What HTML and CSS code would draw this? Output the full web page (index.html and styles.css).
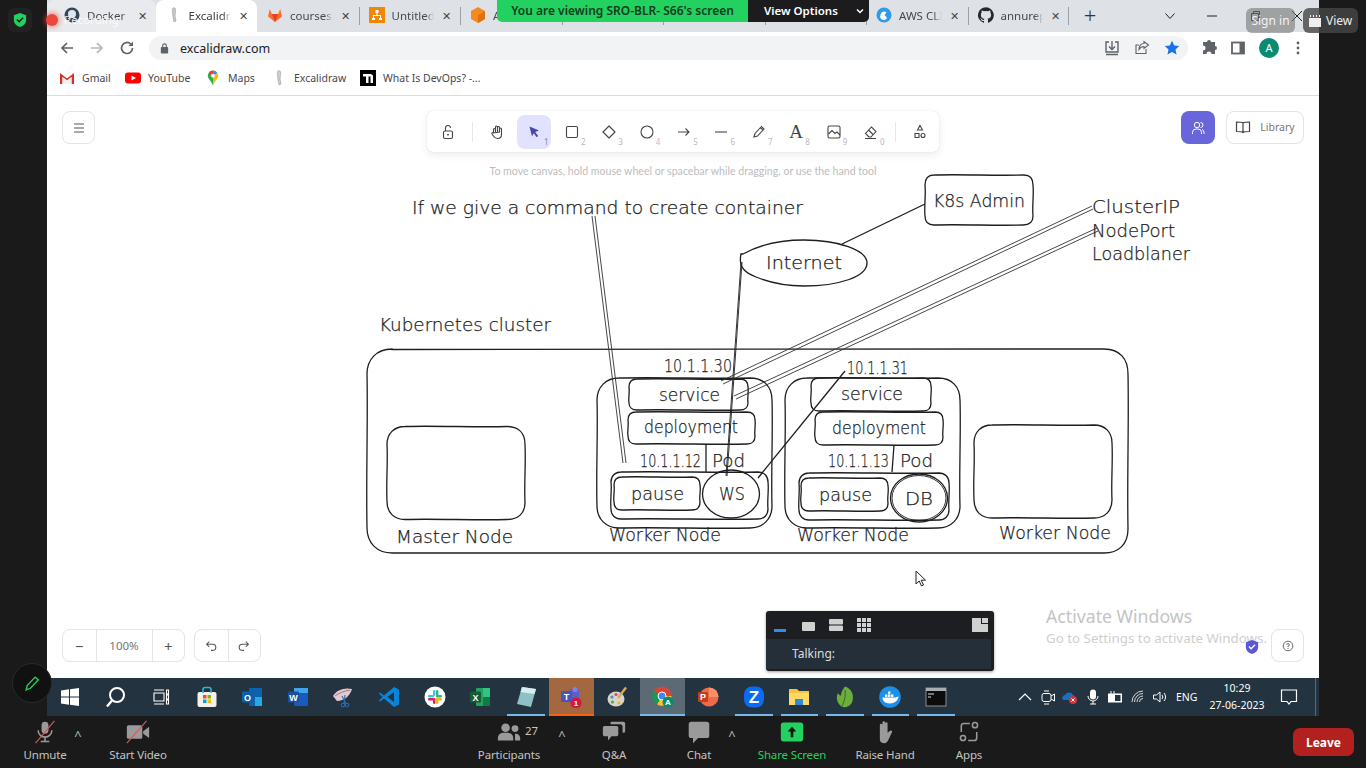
FILE: index.html
```html
<!DOCTYPE html>
<html lang="en">
<head>
<meta charset="utf-8">
<title>Excalidraw - Zoom meeting</title>
<link rel="stylesheet" href="styles.css">
</head>
<body>
<div class="screen">
  <div class="middle">
    <div class="side"></div>
    <div class="desktop">
      <div class="browser">
        <div class="tabstrip">
          <div class="tab tab-hover">
            <svg class="fav" viewBox="0 0 16 16"><circle cx="8" cy="8" r="7.5" fill="#33475b"/><circle cx="8" cy="7" r="4" fill="#dfe6ee"/><path d="M4 12c2-2 6-2 8 0" stroke="#dfe6ee" fill="none"/></svg>
            <span class="tab-title">Docker</span><span class="tab-x">✕</span>
          </div>
          <div class="tab tab-active">
            <svg class="fav" viewBox="0 0 16 16"><path d="M7 1c2-1 3 1 2.500 3L9 9l1 5-2 1-1-5-.5-5C6.300 3 6 2 7 1z" fill="#c9c9c9" stroke="#9a9a9a" stroke-width=".6"/></svg>
            <span class="tab-title">Excalidraw</span><span class="tab-x">✕</span>
          </div>
          <div class="tab">
            <svg class="fav" viewBox="0 0 16 16"><path d="M8 15 1 9.500 2.800 2l2 5h6.400l2-5L15 9.500z" fill="#fc6d26"/><path d="M8 15 4.800 7h6.400z" fill="#e24329"/></svg>
            <span class="tab-title">courses</span><span class="tab-x">✕</span>
          </div>
          <div class="tab tab-sep">
            <svg class="fav" viewBox="0 0 16 16"><rect width="16" height="16" fill="#f08705"/><path d="M6.500 3h3v3h-1v2H12v3h1v2h-3v-2h1V9H5v2h1v2H3v-2h1V8h3.500V6h-1z" fill="#fff"/></svg>
            <span class="tab-title">Untitled</span><span class="tab-x">✕</span>
          </div>
          <div class="tab tab-sep">
            <svg class="fav" viewBox="0 0 16 16"><path d="M8 0l7 4v8l-7 4-7-4V4z" fill="#f58b1f"/><path d="M8 8l7-4v8l-7 4z" fill="#e0700f"/></svg>
            <span class="tab-title">AWS</span><span class="tab-x">✕</span>
          </div>
          <div class="tab tab-sep"></div>
          <div class="tab tab-sep"></div>
          <div class="tab tab-sep"></div>
          <div class="tab tab-sep">
            <svg class="fav" viewBox="0 0 16 16"><circle cx="8" cy="8" r="7.500" fill="#2f9be8"/><path d="M4.500 8a3.500 3.500 0 0 1 6-2.400L8.500 8l2.500 2.800A3.500 3.500 0 0 1 4.500 8z" fill="#fff"/></svg>
            <span class="tab-title">AWS CLI</span><span class="tab-x">✕</span>
          </div>
          <div class="tab tab-sep tab-end">
            <svg class="fav" viewBox="0 0 16 16"><path d="M8 .2a8 8 0 0 0-2.500 15.600c.4.100.5-.2.500-.4v-1.400c-2.200.5-2.700-1-2.700-1-.4-.9-.9-1.200-.9-1.200-.7-.5.100-.5.100-.5.800.1 1.200.8 1.200.8.700 1.200 1.900.9 2.300.7.100-.5.300-.9.500-1.100-1.800-.2-3.600-.9-3.600-4 0-.9.300-1.600.8-2.100-.1-.2-.4-1 .1-2.100 0 0 .7-.2 2.200.8a7.600 7.600 0 0 1 4 0c1.500-1 2.200-.8 2.200-.8.400 1.100.200 1.900.1 2.100.5.600.8 1.300.8 2.100 0 3.100-1.900 3.700-3.700 3.900.3.300.6.700.6 1.500v2.200c0 .2.100.5.600.4A8 8 0 0 0 8 .2z" fill="#24292e"/></svg>
            <span class="tab-title">annurepo</span><span class="tab-x">✕</span>
          </div>
          <span class="newtab">+</span>
          <div class="winctl">
            <svg class="winbtn" viewBox="0 0 12 12"><path d="M1.500 3.500 6 8.500l4.500-5" fill="none" stroke="#222"/></svg>
            <svg class="winbtn" viewBox="0 0 12 12"><path d="M1 6h10" stroke="#222"/></svg>
            <svg class="winbtn" viewBox="0 0 12 12"><path d="M2.500 3.500h7v7h-7zM4.500 3.500v-2h6v6h-1" fill="none" stroke="#222"/></svg>
            <svg class="winbtn" viewBox="0 0 12 12"><path d="M1 1l10 10M11 1 1 11" stroke="#222"/></svg>
          </div>
        </div>

        <div class="addressbar">
          <div class="nav">
            <svg class="navicon" viewBox="0 0 16 16"><path d="M14 8H3M8 3 3 8l5 5" fill="none" stroke="#5f6368" stroke-width="1.700"/></svg>
            <svg class="navicon" viewBox="0 0 16 16"><path d="M2 8h11M8 3l5 5-5 5" fill="none" stroke="#b4b6b9" stroke-width="1.700"/></svg>
            <svg class="navicon" viewBox="0 0 16 16"><path d="M13.500 8A5.500 5.500 0 1 1 11.800 4" fill="none" stroke="#5f6368" stroke-width="1.700"/><path d="M14 1.500V6H9.500z" fill="#5f6368"/></svg>
          </div>
          <div class="omnibox">
            <svg class="lock" viewBox="0 0 12 12"><rect x="2" y="5" width="8" height="7" rx="1" fill="#5f6368"/><path d="M4 5V3.500a2 2 0 0 1 4 0V5" fill="none" stroke="#5f6368" stroke-width="1.200"/></svg>
            <span class="url">excalidraw.com</span>
            <div class="omni-actions">
              <svg class="omni-icon" viewBox="0 0 16 16"><path d="M5 2H2v10h12V2h-3M8 1v8M5 6.500 8 9.500l3-3M2 14.500h12" fill="none" stroke="#5f6368" stroke-width="1.400"/></svg>
              <svg class="omni-icon" viewBox="0 0 16 16"><path d="M12 9v4.500H2V5h3M14.500 5 10 1.500V3.500C7 3.500 5 6 5 9.500 6.500 7 8 6.500 10 6.500V8.500z" fill="none" stroke="#5f6368" stroke-width="1.100"/></svg>
              <svg class="omni-icon" viewBox="0 0 16 16"><path d="M8 .8l2.200 4.700 5 .6-3.700 3.500 1 5L8 12.100l-4.500 2.500 1-5L.8 6.100l5-.6z" fill="#1a73e8"/></svg>
            </div>
          </div>
          <div class="chrome-actions">
            <svg class="omni-icon" viewBox="0 0 16 16"><path d="M6 2a2 2 0 0 1 4 0h4v4a2 2 0 0 1 0 4v4h-3.500a2.500 2.500 0 0 0-5 0H2v-3.500a2.500 2.500 0 0 0 0-5V2z" fill="#5f6368"/></svg>
            <svg class="omni-icon" viewBox="0 0 16 16"><rect x="2" y="2.500" width="12" height="11" fill="#fff" stroke="#5f6368" stroke-width="1.800"/><rect x="9.500" y="2.500" width="4.500" height="11" fill="#5f6368"/></svg>
            <span class="avatar">A</span>
            <svg class="omni-icon" viewBox="0 0 16 16"><circle cx="8" cy="3" r="1.400" fill="#5f6368"/><circle cx="8" cy="8" r="1.400" fill="#5f6368"/><circle cx="8" cy="13" r="1.400" fill="#5f6368"/></svg>
          </div>
        </div>

        <div class="bookmarks">
          <div class="bm bm-gmail">
            <svg class="bm-icon" viewBox="0 0 16 16"><path d="M1 14V3l7 5.500L15 3v11h-2.500V7L8 10.500 3.500 7v7z" fill="#d93025"/><path d="M3.500 14V7L8 10.500 12.500 7v7z" fill="#f1f1f1"/></svg>
            <span>Gmail</span>
          </div>
          <div class="bm bm-yt">
            <svg class="bm-icon" viewBox="0 0 16 16"><rect y="2.500" width="16" height="11" rx="3" fill="#f00"/><path d="M6.500 5.500 11 8l-4.500 2.500z" fill="#fff"/></svg>
            <span>YouTube</span>
          </div>
          <div class="bm bm-maps">
            <svg class="bm-icon" viewBox="0 0 16 16"><path d="M8 .5a5.200 5.200 0 0 1 5.200 5.200C13.200 9 9.500 11 8 15.500z" fill="#fbbc04"/><path d="M8 .5a5.200 5.200 0 0 0-5.200 5.200C2.800 9 6.500 11 8 15.500z" fill="#34a853"/><path d="M4 2.200A5.200 5.200 0 0 1 8 .5v3.300A2 2 0 0 0 6 5.500z" fill="#ea4335"/><path d="M8 .5a5.200 5.200 0 0 1 4.200 2.300L9.500 5A2 2 0 0 0 8 3.800z" fill="#4285f4"/><circle cx="8" cy="5.700" r="1.900" fill="#fff"/></svg>
            <span>Maps</span>
          </div>
          <div class="bm bm-ex">
            <svg class="bm-icon" viewBox="0 0 16 16"><path d="M7 1c2-1 3 1 2.500 3L9 9l1 5-2 1-1-5-.5-5C6.300 3 6 2 7 1z" fill="#cfcfcf" stroke="#9a9a9a" stroke-width=".6"/></svg>
            <span>Excalidraw</span>
          </div>
          <div class="bm">
            <svg class="bm-icon" viewBox="0 0 16 16"><rect width="16" height="16" fill="#000"/><path d="M3 4h8l2 1.500V13h-2.500V6.500h-2V13H6V6.500H3z" fill="#fff"/></svg>
            <span>What Is DevOps? -...</span>
          </div>
        </div>

        <div class="page">
          <svg class="canvas" viewBox="47 96 1272 582">
            <g class="ink">
              <path d="M392 349.500C600 348 900 350 1104 349c16 0 24 10 24 25 1 50-1 105 0 155 0 15-9 24-24 24-200 1-520-1-712 0-15 0-25-10-25-25-1-50 1-105 0-154 0-15 10-25 25-25z"/>
              <path d="M405 426.500c30-1 72 1 102 0 12 0 18 7 18 18 1 20-1 38 0 58 0 11-7 17-18 17-30 1-72-1-102 0-11 0-18-7-18-18-1-20 1-38 0-57 0-11 7-18 18-18z"/>
              <path d="M992 425c30-1 72 1 102 0 11 0 18 7 18 18 1 20-1 38 0 57 0 11-7 18-18 18-30 1-72-1-102 0-11 0-18-7-18-18-1-20 1-38 0-57 0-11 7-18 18-18z"/>
              <path d="M619 378c40-1 90 1 131 0 14 0 22 9 22 22 1 30-1 76 0 106 0 13-9 22-22 22-40 1-90-1-131 0-13 0-22-9-22-22-1-30 1-76 0-106 0-13 9-22 22-22z"/>
              <path d="M637 379c30-1 72 1 103 0 5 0 8 3 8 8 1 5-1 11 0 16 0 4-3 7-8 7-30 1-72-1-103 0-5 0-8-3-8-7-1-5 1-11 0-16 0-5 3-8 8-8z"/>
              <path d="M636 412c30-1 80 1 111 0 5 0 8 3 8 8 1 5-1 11 0 16 0 5-3 8-8 8-30 1-80-1-111 0-5 0-8-3-8-8-1-5 1-11 0-16 0-5 3-8 8-8z"/>
              <path d="M621 472c40-1 100 1 137 0 6 0 10 4 10 10 1 8-1 19 0 27 0 6-4 10-10 10-40 1-100-1-137 0-6 0-10-4-10-10-1-8 1-19 0-27 0-6 4-10 10-10z"/>
              <path d="M622 477c20-1 50 1 70 0 5 0 8 3 8 8 1 5-1 12 0 17 0 5-3 8-8 8-20 1-50-1-70 0-5 0-8-3-8-8-1-5 1-12 0-17 0-5 3-8 8-8z"/>
              <ellipse cx="731" cy="494" rx="28.500" ry="24"/>
              <path d="M706 444v28"/>
              <path d="M807 378c40-1 90 1 131 0 14 0 22 9 22 22 1 30-1 76 0 106 0 13-9 22-22 22-40 1-90-1-131 0-13 0-22-9-22-22-1-30 1-76 0-106 0-13 9-22 22-22z"/>
              <path d="M819 378c30-1 72 1 104 0 5 0 8 3 8 8 1 5-1 12 0 17 0 5-3 8-8 8-30 1-72-1-104 0-5 0-8-3-8-8-1-5 1-12 0-17 0-5 3-8 8-8z"/>
              <path d="M823 412c30-1 82 1 112 0 5 0 8 3 8 8 1 5-1 12 0 17 0 5-3 8-8 8-30 1-82-1-112 0-5 0-8-3-8-8-1-5 1-12 0-17 0-5 3-8 8-8z"/>
              <path d="M809 473c40-1 90 1 130 0 6 0 10 4 10 10 1 8-1 20 0 27 0 6-4 10-10 10-40 1-90-1-130 0-6 0-10-4-10-10-1-8 1-19 0-27 0-6 4-10 10-10z"/>
              <path d="M809 478c20-1 50 1 71 0 5 0 8 3 8 8 1 5-1 12 0 17 0 5-3 8-8 8-20 1-50-1-71 0-5 0-8-3-8-8-1-5 1-12 0-17 0-5 3-8 8-8z"/>
              <ellipse cx="919" cy="498" rx="28.500" ry="24"/>
              <ellipse class="thin" cx="919" cy="498" rx="27" ry="22.500"/>
              <path d="M894 445l-2 27"/>
              <path d="M743 254c18-10 40-14 61-14 34 0 63 10 63 23 0 14-29 23-63 23-20 0-36-4-48-9-10-4-18-9-15-23z"/>
              <path d="M842 244l83-40"/>
              <path d="M934 175c30-1 60 1 90 0 6 0 9 4 9 10 1 10-1 21 0 31 0 6-4 9-10 9-28 1-60-1-89 0-6 0-9-3-9-9-1-10 1-21 0-31 0-6 3-10 9-10z"/>
              <path d="M741 262l-15 214M742 262l-15 214" class="thin"/>
              <path d="M845 371l-87 107"/>
            </g>
            <g class="ink-double">
              <path d="M592 216l31 247M595 216l31 247"/>
              <path d="M1092 206 721 381M1093 209 723 384"/>
              <path d="M1097 228 734 396M1098 231 736 399"/>
            </g>
            <text class="hand" lengthAdjust="spacingAndGlyphs" x="412" y="214" textLength="391">If we give a command to create container</text>
            <text class="hand" lengthAdjust="spacingAndGlyphs" x="379" y="331" textLength="172">Kubernetes cluster</text>
            <text class="hand" lengthAdjust="spacingAndGlyphs" x="766" y="269" textLength="76">Internet</text>
            <text class="hand" lengthAdjust="spacingAndGlyphs" x="933" y="207" textLength="92">K8s Admin</text>
            <text class="hand" lengthAdjust="spacingAndGlyphs" x="1092" y="213" textLength="88">ClusterIP</text>
            <text class="hand" lengthAdjust="spacingAndGlyphs" x="1092" y="237" textLength="83">NodePort</text>
            <text class="hand" lengthAdjust="spacingAndGlyphs" x="1092" y="260" textLength="98">Loadblaner</text>
            <text class="hand" lengthAdjust="spacingAndGlyphs" x="664" y="372" textLength="68">10.1.1.30</text>
            <text class="hand" lengthAdjust="spacingAndGlyphs" x="847" y="374" textLength="61">10.1.1.31</text>
            <text class="hand" lengthAdjust="spacingAndGlyphs" x="659" y="401" textLength="61">service</text>
            <text class="hand" lengthAdjust="spacingAndGlyphs" x="644" y="433" textLength="94">deployment</text>
            <text class="hand" lengthAdjust="spacingAndGlyphs" x="640" y="467" textLength="61">10.1.1.12</text>
            <text class="hand" lengthAdjust="spacingAndGlyphs" x="712" y="467" textLength="33">Pod</text>
            <text class="hand" lengthAdjust="spacingAndGlyphs" x="631" y="500" textLength="53">pause</text>
            <text class="hand" lengthAdjust="spacingAndGlyphs" x="719" y="500" textLength="26">WS</text>
            <text class="hand" lengthAdjust="spacingAndGlyphs" x="396" y="543" textLength="117">Master Node</text>
            <text class="hand" lengthAdjust="spacingAndGlyphs" x="609" y="541" textLength="112">Worker Node</text>
            <text class="hand" lengthAdjust="spacingAndGlyphs" x="841" y="400" textLength="62">service</text>
            <text class="hand" lengthAdjust="spacingAndGlyphs" x="832" y="434" textLength="94">deployment</text>
            <text class="hand" lengthAdjust="spacingAndGlyphs" x="828" y="467" textLength="61">10.1.1.13</text>
            <text class="hand" lengthAdjust="spacingAndGlyphs" x="900" y="467" textLength="33">Pod</text>
            <text class="hand" lengthAdjust="spacingAndGlyphs" x="819" y="501" textLength="53">pause</text>
            <text class="hand" lengthAdjust="spacingAndGlyphs" x="905" y="505" textLength="28">DB</text>
            <text class="hand" lengthAdjust="spacingAndGlyphs" x="797" y="541" textLength="112">Worker Node</text>
            <text class="hand" lengthAdjust="spacingAndGlyphs" x="999" y="539" textLength="112">Worker Node</text>
          </svg>

          <div class="page-top">
            <div class="top-left">
              <button class="ex-btn menu-btn">
                <svg class="tool" viewBox="0 0 16 16"><path d="M3 4h10M3 8h10M3 12h10" stroke="#555" stroke-width="1.100"/></svg>
              </button>
            </div>
            <div class="top-center">
              <div class="toolbar">
                <div class="tool-cell"><svg class="tool" viewBox="0 0 16 16"><rect x="3.500" y="7" width="9" height="7.500" rx="1.500" class="ts"/><path d="M5.500 7V4a2.500 2.500 0 0 1 5 0" class="ts"/><circle cx="8" cy="10.700" r=".9" fill="#444"/></svg></div>
                <span class="tool-sep"></span>
                <div class="tool-cell"><svg class="tool" viewBox="0 0 16 16"><path d="M4.500 9V5.500a1 1 0 0 1 2 0V8M6.500 7.500V3a1 1 0 0 1 2 0v5M8.500 7.500V3.500a1 1 0 0 1 2 0V8M10.500 8V5a1 1 0 0 1 2 0v5.500c0 2.500-1.500 4-4 4-2 0-3-.8-4-2.500L3 10c-.6-1 .6-2 1.500-1z" class="ts"/></svg></div>
                <div class="tool-cell tool-on"><svg class="tool" viewBox="0 0 16 16"><path d="M3.500 2.500l9.500 4-3.800 1.500 3 4-1.500 1.200-3-4L6 12.500z" fill="#4a47b1"/></svg><sub class="key">1</sub></div>
                <div class="tool-cell"><svg class="tool" viewBox="0 0 16 16"><rect x="2.500" y="2.500" width="11" height="11" rx="1.500" class="ts"/></svg><sub class="key">2</sub></div>
                <div class="tool-cell"><svg class="tool" viewBox="0 0 16 16"><path d="M8 2l6 6-6 6-6-6z" class="ts" stroke-linejoin="round"/></svg><sub class="key">3</sub></div>
                <div class="tool-cell"><svg class="tool" viewBox="0 0 16 16"><circle cx="8" cy="8" r="6" class="ts"/></svg><sub class="key">4</sub></div>
                <div class="tool-cell"><svg class="tool" viewBox="0 0 16 16"><path d="M2 8h11M9.500 4.500 13 8l-3.500 3.500" class="ts"/></svg><sub class="key">5</sub></div>
                <div class="tool-cell"><svg class="tool" viewBox="0 0 16 16"><path d="M2 8h12" class="ts"/></svg><sub class="key">6</sub></div>
                <div class="tool-cell"><svg class="tool" viewBox="0 0 16 16"><path d="M3 13l1-3.500 6.500-7 2.500 2.500-6.500 7zM9.500 3.700l2.500 2.500" class="ts"/></svg><sub class="key">7</sub></div>
                <div class="tool-cell"><span class="tool-a">A</span><sub class="key">8</sub></div>
                <div class="tool-cell"><svg class="tool" viewBox="0 0 16 16"><rect x="2" y="2" width="12" height="12" rx="1.500" class="ts"/><path d="M2.500 10 6 6.500l3 3 2-1.500 3 3" class="ts"/></svg><sub class="key">9</sub></div>
                <div class="tool-cell"><svg class="tool" viewBox="0 0 16 16"><path d="M6 13 2.500 9.500l6-6.500L13 7.500 8 13zM5.500 6l4.500 4.500M2 14.500h11" class="ts"/></svg><sub class="key">0</sub></div>
                <span class="tool-sep"></span>
                <div class="tool-cell"><svg class="tool" viewBox="0 0 16 16"><path d="M8 1.500 10.500 6h-5zM3 9.500h4v4H3z" class="ts"/><circle cx="11" cy="11.500" r="2" class="ts"/></svg></div>
              </div>
              <p class="hint">To move canvas, hold mouse wheel or spacebar while dragging, or use the hand tool</p>
            </div>
            <div class="top-right">
              <button class="collab">
                <svg class="tool" viewBox="0 0 16 16"><circle cx="7" cy="5" r="2.700" fill="none" stroke="#fff"/><path d="M2.500 14v-1.500A3.500 3.500 0 0 1 6 9h2a3.500 3.500 0 0 1 3.500 3.500V14M10.500 2.500a2.500 2.500 0 0 1 0 5M12 9.500a3 3 0 0 1 2 3V14" fill="none" stroke="#fff"/></svg>
              </button>
              <button class="ex-btn library">
                <svg class="tool" viewBox="0 0 16 16"><path d="M8 4C6.500 3 4 3 1.500 3v9.500c2.500 0 5 0 6.500 1 1.500-1 4-1 6.500-1V3C12 3 9.500 3 8 4zM8 4v9.500" fill="none" stroke="#444" stroke-width="1.200"/></svg>
                <span>Library</span>
              </button>
            </div>
          </div>

          <div class="page-bottom">
            <div class="zoom-controls">
              <div class="ex-group">
                <span class="ex-cell ex-sq">−</span>
                <span class="ex-cell ex-pct">100%</span>
                <span class="ex-cell ex-sq">+</span>
              </div>
              <div class="ex-group">
                <span class="ex-cell ex-sq"><svg class="tool-sm" viewBox="0 0 16 16"><path d="M3 6h7a3.500 3.500 0 0 1 0 7H8M6 3 3 6l3 3" fill="none" stroke="#555" stroke-width="1.200"/></svg></span>
                <span class="ex-cell ex-sq"><svg class="tool-sm" viewBox="0 0 16 16"><path d="M13 6H6a3.500 3.500 0 0 0 0 7h2M10 3l3 3-3 3" fill="none" stroke="#555" stroke-width="1.200"/></svg></span>
              </div>
            </div>
            <button class="ex-btn help">
              <svg class="tool-sm" viewBox="0 0 16 16"><circle cx="8" cy="8" r="5.500" fill="none" stroke="#555"/><path d="M6.500 6.500A1.500 1.500 0 1 1 8 8.200V9.300M8 10.500v1" fill="none" stroke="#555"/></svg>
            </button>
          </div>
        </div>
      </div>

      <div class="taskbar">
        <div class="task-apps">
          <div class="app"><svg class="appicon" viewBox="0 0 22 22"><path d="M2 4.500 10 3.300v7.200H2zM11 3.200 20 2v8.500h-9zM2 11.500h8v7.200L2 17.500zM11 11.500h9V20l-9-1.200z" fill="#fff"/></svg></div>
          <div class="app"><svg class="appicon" viewBox="0 0 22 22"><circle cx="13" cy="9" r="7" fill="none" stroke="#fff" stroke-width="2"/><path d="M8 14.500 3 20.500" stroke="#fff" stroke-width="2.400"/></svg></div>
          <div class="app"><svg class="appicon" viewBox="0 0 22 22"><path d="M4 7h10v8H4zM4 4h10M4 18h10M16.500 4h2v4h-2zM16.500 9h2v4h-2zM16.500 14h2v4h-2z" fill="none" stroke="#fff" stroke-width="1.100"/></svg></div>
          <div class="app"><svg class="appicon" viewBox="0 0 22 22"><rect x="1.500" y="6" width="19" height="15" rx="2" fill="#f4f1ea"/><path d="M7 7V3.500A2 2 0 0 1 9 1.500h4a2 2 0 0 1 2 2V7" fill="none" stroke="#29b6d8" stroke-width="1.600"/><rect x="7" y="9" width="3.500" height="3.500" fill="#f25022"/><rect x="11.500" y="9" width="3.500" height="3.500" fill="#7fba00"/><rect x="7" y="13.500" width="3.500" height="3.500" fill="#00a4ef"/><rect x="11.500" y="13.500" width="3.500" height="3.500" fill="#ffb900"/></svg></div>
          <div class="app"><svg class="appicon" viewBox="0 0 22 22"><rect x="8" y="2" width="13" height="18" rx="1" fill="#0a64ad"/><rect x="14" y="11" width="7" height="9" fill="#28a8ea"/><rect x="1" y="5.500" width="11" height="11" rx="1" fill="#0f5fa8"/><text x="6.500" y="14.500" class="app-letter">O</text></svg></div>
          <div class="app"><svg class="appicon" viewBox="0 0 22 22"><rect x="7" y="2" width="14" height="18" rx="1" fill="#185abd"/><rect x="7" y="2" width="14" height="5" fill="#41a5ee"/><rect x="1" y="5.500" width="11" height="11" rx="1" fill="#1d4f9e"/><text x="6.500" y="14.500" class="app-letter">W</text></svg></div>
          <div class="app"><svg class="appicon" viewBox="0 0 22 22"><path d="M1 10C4 4 13 1 20 3 18 10 12 15 5 15z" fill="#e4c9cf"/><path d="M3 10C7 7 12 5 18 4" stroke="#a8727f" fill="none"/><path d="M10 10l4 8M13 9l-1 9" stroke="#2c6fb8" stroke-width="1.200"/><circle cx="15" cy="19" r="1.800" fill="none" stroke="#2c6fb8"/><circle cx="11" cy="19" r="1.800" fill="none" stroke="#2c6fb8"/></svg></div>
          <div class="app"><svg class="appicon" viewBox="0 0 22 22"><path d="M16 1l5 2.500v15L16 21 6 12.500 2 15.500 0.800 14.500 4.500 11 .8 7.500 2 6.500l4 3z" fill="#0a84d6"/><path d="M16 6 9.500 11l6.500 5z" fill="#233340"/></svg></div>
          <div class="app"><svg class="appicon" viewBox="0 0 22 22"><circle cx="11" cy="11" r="10.500" fill="#fff"/><rect x="9" y="4" width="2.400" height="6" rx="1.200" fill="#36c5f0"/><rect x="4" y="9" width="6" height="2.400" rx="1.200" fill="#36c5f0"/><rect x="12" y="4" width="2.400" height="6" rx="1.200" fill="#2eb67d"/><rect x="12" y="9" width="6" height="2.400" rx="1.200" fill="#2eb67d"/><rect x="12" y="12" width="2.400" height="6" rx="1.200" fill="#ecb22e"/><rect x="12" y="12" width="6" height="2.400" rx="1.200" fill="#ecb22e"/><rect x="9" y="12" width="2.400" height="6" rx="1.200" fill="#e01e5a"/><rect x="4" y="12" width="6" height="2.400" rx="1.200" fill="#e01e5a"/></svg></div>
          <div class="app"><svg class="appicon" viewBox="0 0 22 22"><rect x="7" y="2" width="14" height="18" rx="1" fill="#21a366"/><rect x="14" y="2" width="7" height="9" fill="#33c481"/><rect x="14" y="11" width="7" height="9" fill="#107c41"/><rect x="1" y="5.500" width="11" height="11" rx="1" fill="#185c37"/><text x="6.500" y="14.500" class="app-letter">X</text></svg></div>
          <div class="app app-open"><svg class="appicon" viewBox="0 0 22 22"><path d="M7 1l14 2-5 18-14-3z" fill="#8fc0c8"/><path d="M7 1l14 2-1.500 5L5.500 6z" fill="#d6eef0"/></svg></div>
          <div class="app app-alert"><svg class="appicon" viewBox="0 0 22 22"><rect x="9" y="3" width="10" height="14" rx="2" fill="#5b5fc7"/><circle cx="15" cy="3.500" r="2.500" fill="#7b83eb"/><rect x="1" y="5" width="11" height="11" rx="1" fill="#4b53bc"/><text x="6.500" y="14" class="app-letter">T</text><circle cx="16" cy="17" r="5.500" fill="#d6173b"/><text x="16" y="20" class="app-badge">1</text></svg></div>
          <div class="app"><svg class="appicon" viewBox="0 0 22 22"><ellipse cx="10" cy="13" rx="8.500" ry="7.500" fill="#d8d4c8"/><circle cx="6" cy="11" r="1.600" fill="#3f8fd2"/><circle cx="10" cy="8.500" r="1.600" fill="#e0503a"/><circle cx="6.500" cy="16" r="1.600" fill="#53a546"/><circle cx="13" cy="17" r="1.600" fill="#e5b42f"/><path d="M12 12 20 1.500" stroke="#d8a860" stroke-width="2.400"/></svg></div>
          <div class="app app-active app-open"><svg class="appicon" viewBox="0 0 22 22"><circle cx="10" cy="10" r="9.500" fill="#db4437"/><path d="M10 10H19.500A9.500 9.500 0 0 1 5 18.200z" fill="#fbc02d"/><path d="M10 10 5 18.200A9.500 9.500 0 0 1 1.800 5z" fill="#0f9d58"/><circle cx="10" cy="10" r="4" fill="#4285f4" stroke="#fff"/><circle cx="16" cy="16" r="5.500" fill="#0b8a72"/><text x="16" y="19" class="app-badge">A</text></svg></div>
          <div class="app"><svg class="appicon" viewBox="0 0 22 22"><circle cx="12" cy="11" r="9.500" fill="#ed6c47"/><path d="M12 1.500A9.500 9.500 0 0 1 21.500 11H12z" fill="#ff8f6b"/><rect x="1" y="6" width="10" height="10" rx="1" fill="#c43e1c"/><text x="6" y="14" class="app-letter">P</text></svg></div>
          <div class="app app-open"><svg class="appicon" viewBox="0 0 22 22"><rect x="1" y="0.500" width="20" height="21" rx="8" fill="#0b6cf1"/><text x="11" y="17" class="app-z">Z</text></svg></div>
          <div class="app app-open"><svg class="appicon" viewBox="0 0 22 22"><path d="M1 3h8l2 2h10v14H1z" fill="#f5c542"/><rect x="1" y="7" width="20" height="12" fill="#ffd966"/><rect x="7" y="13" width="8" height="6" fill="#2d8bd6"/></svg></div>
          <div class="app app-open"><svg class="appicon" viewBox="0 0 22 22"><path d="M11 .5C18 3 20 9 18.500 15 17 20 12 22 9 21 3 19 1.500 11 4 7c1 2 2 2.500 3 2.500C7 6 9 3 11 .5z" fill="#6cae3e"/><path d="M11 4c1 6-1 12-3 16" stroke="#2f6b22" fill="none"/></svg></div>
          <div class="app app-open"><svg class="appicon" viewBox="0 0 22 22"><circle cx="11" cy="11" r="10.800" fill="#1d8fe8"/><path d="M3.500 11.500h13c1 0 1.500-1 3-1-.3 3-3 7-8.500 7-5 0-7.500-3-7.500-6z" fill="#fff"/><rect x="6" y="8.500" width="2.400" height="2.400" fill="#fff"/><rect x="9" y="8.500" width="2.400" height="2.400" fill="#fff"/><rect x="12" y="8.500" width="2.400" height="2.400" fill="#fff"/><rect x="9" y="5.500" width="2.400" height="2.400" fill="#fff"/></svg></div>
          <div class="app app-open"><svg class="appicon" viewBox="0 0 22 22"><rect x="1" y="2" width="20" height="18" fill="#0c0c0c" stroke="#8a8f94"/><rect x="1" y="2" width="20" height="3" fill="#a8adb2"/><path d="M3 8h6M3 11h3" stroke="#ddd" stroke-width="1.100"/></svg></div>
        </div>
        <div class="tray">
          <svg class="tray-i" viewBox="0 0 16 16"><path d="M2 11l6-6 6 6" fill="none" stroke="#fff" stroke-width="1.200"/></svg>
          <svg class="tray-i" viewBox="0 0 16 16"><rect x="2" y="4.500" width="9" height="8" rx="2" fill="none" stroke="#fff"/><path d="M11 7l3.500-2v7l-3.500-2M4 2h5M4 15h5" fill="none" stroke="#fff"/></svg>
          <svg class="tray-i" viewBox="0 0 16 16"><path d="M1 11a3 3 0 0 1 2-5 4.500 4.500 0 0 1 8 0 3 3 0 0 1 1 5z" fill="#1a6fc4"/><circle cx="11" cy="11" r="4" fill="#d13438"/><path d="M9.500 9.500l3 3m0-3-3 3" stroke="#fff"/></svg>
          <svg class="tray-i" viewBox="0 0 16 16"><rect x="5" y="0.500" width="6" height="10" rx="3" fill="#fff"/><path d="M3 7a5 5 0 0 0 10 0M8 12v3M5 15h6" fill="none" stroke="#fff"/></svg>
          <svg class="tray-i" viewBox="0 0 16 16"><rect x="1.500" y="5" width="13" height="8" fill="#fff" stroke="#fff"/><rect x="8" y="6" width="5.500" height="6" fill="#233340"/><path d="M4 2v3M7 2v3" stroke="#fff"/></svg>
          <svg class="tray-i" viewBox="0 0 16 16"><path d="M2 13a11 11 0 0 1 11-11M4.500 13A8.500 8.500 0 0 1 13 4.500M7 13a6 6 0 0 1 6-6M9.500 13a3.500 3.500 0 0 1 3.500-3.500" fill="none" stroke="#fff" stroke-width=".8"/></svg>
          <svg class="tray-i" viewBox="0 0 16 16"><path d="M1.500 6h3L8 3v10L4.500 10h-3zM10 6a3 3 0 0 1 0 4M12 4a6 6 0 0 1 0 8" fill="none" stroke="#fff"/></svg>
          <span class="lang">ENG</span>
          <div class="clock"><span>10:29</span><span>27-06-2023</span></div>
          <svg class="tray-note" viewBox="0 0 18 18"><path d="M1.500 2h15v11.500H11l-2 2.500-2-2.500H1.500z" fill="none" stroke="#fff" stroke-width="1.200"/></svg>
          <span class="show-desktop"></span>
        </div>
      </div>
    </div>
    <div class="side"></div>
  </div>

  <div class="meeting">
    <div class="m-item m-mute">
      <svg class="m-icon" viewBox="0 0 28 28"><rect x="10" y="2" width="8" height="14" rx="4" fill="#9a9a9a"/><path d="M6 12a8 8 0 0 0 16 0M14 20v5M9 25h10" fill="none" stroke="#9a9a9a" stroke-width="1.800"/><path d="M3 27 25 1" stroke="#e0565b" stroke-width="1.300"/></svg>
      <span>Unmute</span>
    </div>
    <span class="m-caret m-c1">^</span>
    <div class="m-item m-video">
      <svg class="m-icon" viewBox="0 0 28 28"><rect x="1" y="6" width="18" height="16" rx="2" fill="#9a9a9a"/><path d="M20 13l7-5v13l-7-5z" fill="#9a9a9a"/><path d="M1 27 24 1" stroke="#e0565b" stroke-width="1.300"/></svg>
      <span>Start Video</span>
    </div>
    <div class="m-item m-part">
      <span class="m-iconwrap">
        <svg class="m-icon m-icon-wide" viewBox="0 0 28 28"><circle cx="10" cy="9" r="5" fill="#9a9a9a"/><circle cx="21" cy="10" r="4" fill="#9a9a9a"/><path d="M1 24v-3a6 6 0 0 1 6-6h6a6 6 0 0 1 6 6v3zM21 16h1a5 5 0 0 1 5 5v3h-6z" fill="#9a9a9a"/></svg>
        <span class="m-count">27</span>
      </span>
      <span>Participants</span>
    </div>
    <span class="m-caret m-c2">^</span>
    <div class="m-item m-qa">
      <svg class="m-icon" viewBox="0 0 28 28"><path d="M3 7h14a2 2 0 0 1 2 2v8a2 2 0 0 1-2 2h-6l-4 5v-5H3a2 2 0 0 1-2-2V9a2 2 0 0 1 2-2z" fill="#9a9a9a"/><path d="M11 2h14a2 2 0 0 1 2 2v9a2 2 0 0 1-2 2h-1v-7a3 3 0 0 0-3-3H10V3a1 1 0 0 1 1-1z" fill="#9a9a9a"/></svg>
      <span>Q&amp;A</span>
    </div>
    <div class="m-item m-chat">
      <svg class="m-icon" viewBox="0 0 28 28"><path d="M5 2h18a3 3 0 0 1 3 3v13a3 3 0 0 1-3 3H13l-6 6v-6H5a3 3 0 0 1-3-3V5a3 3 0 0 1 3-3z" fill="#9a9a9a"/></svg>
      <span>Chat</span>
    </div>
    <span class="m-caret m-c3">^</span>
    <div class="m-item m-share">
      <svg class="m-icon" viewBox="0 0 28 28"><rect x="1" y="3" width="26" height="22" rx="3" fill="#22d15f"/><path d="M14 8l5 5.500h-3.500V20h-3v-6.500H9z" fill="#111"/></svg>
      <span>Share Screen</span>
    </div>
    <div class="m-item m-raise">
      <svg class="m-icon" viewBox="0 0 28 28"><path d="M8 14V6a1.500 1.500 0 0 1 3 0v6V3a1.500 1.500 0 0 1 3 0v9V4a1.500 1.500 0 0 1 3 0v9 2l3-2.500c1.500-1 3 .5 2 2L18 23c-1 2-2 4-5 4-4 0-5-2-5-5z" fill="#9a9a9a"/></svg>
      <span>Raise Hand</span>
    </div>
    <div class="m-item m-apps">
      <svg class="m-icon" viewBox="0 0 28 28"><circle cx="21" cy="6" r="3" fill="none" stroke="#9a9a9a" stroke-width="1.800"/><circle cx="7" cy="21" r="3" fill="none" stroke="#9a9a9a" stroke-width="1.800"/><path d="M15 4H8a3 3 0 0 0-3 3v7M13 24h7a3 3 0 0 0 3-3v-7" fill="none" stroke="#9a9a9a" stroke-width="1.800"/></svg>
      <span>Apps</span>
    </div>
    <button class="leave">Leave</button>
  </div>

  <div class="shield-box">
    <svg class="shield" viewBox="0 0 16 18"><path d="M8 1l7 2.500V9c0 4-3 7-7 8-4-1-7-4-7-8V3.500z" fill="#22d15f"/><path d="M4.500 8.500l2.500 2.500 4.500-4.500" fill="none" stroke="#111" stroke-width="1.600"/></svg>
  </div>
  <div class="recording"><span class="rec-dot"></span><span>Recording</span></div>
  <div class="banner">
    <span class="banner-green">You are viewing SRO-BLR- S66's screen</span>
    <span class="banner-dark">View Options<svg class="banner-caret" viewBox="0 0 10 10"><path d="M2 3.500 5 6.500 8 3.500" fill="none" stroke="#fff" stroke-width="1.500"/></svg></span>
  </div>
  <div class="signin">Sign in</div>
  <div class="viewbtn">
    <svg class="viewgrid" viewBox="0 0 12 12"><rect y="3" width="12" height="9" fill="#eee"/><path d="M1.500 0v2M4.500 0v2M7.500 0v2M10.500 0v2" stroke="#eee"/></svg>
    <span>View</span>
  </div>
  <div class="pen">
    <svg class="pen-i" viewBox="0 0 16 16"><path d="M2 14l1-4 7.500-8 3 2.500-7.500 8z" fill="none" stroke="#22d15f" stroke-width="1.300"/></svg>
  </div>
  <div class="activate">
    <p class="act-1">Activate Windows</p>
    <p class="act-2">Go to Settings to activate Windows.</p>
  </div>
  <svg class="bluecheck" viewBox="0 0 16 18"><path d="M8 1l7 2.500V9c0 4-3 7-7 8-4-1-7-4-7-8V3.500z" fill="#5b57d6"/><path d="M4.500 8.500l2.500 2.500 4.500-4.500" fill="none" stroke="#fff" stroke-width="1.500"/></svg>
  <div class="gallery">
    <div class="gal-top">
      <div class="gal-views">
        <span class="gal-min"></span>
        <span class="gal-speaker"></span>
        <svg class="gal-icon" viewBox="0 0 14 14"><rect y="1" width="14" height="5.500" rx="1" fill="#d0d0d0"/><rect y="7.500" width="14" height="5.500" rx="1" fill="#d0d0d0"/></svg>
        <svg class="gal-icon" viewBox="0 0 14 14"><path d="M0 0h4v4H0zM5 0h4v4H5zM10 0h4v4h-4zM0 5h4v4H0zM5 5h4v4H5zM10 5h4v4h-4zM0 10h4v4H0zM5 10h4v4H5zM10 10h4v4h-4z" fill="#d0d0d0"/></svg>
      </div>
      <svg class="gal-pip" viewBox="0 0 16 14"><path d="M0 0h9v6h7v8H0zM10 0h6v5h-6z" fill="#d0d0d0"/></svg>
    </div>
    <div class="gal-talk">Talking:</div>
  </div>
  <svg class="cursor" viewBox="0 0 12 17"><path d="M1 1v13l3.200-3 2.300 5 2-1-2.300-4.800H10.500z" fill="#fff" stroke="#222" stroke-width="1"/></svg>
</div>
</body>
</html>
```

FILE: styles.css
```css
* { box-sizing: border-box; }
html, body { margin: 0; padding: 0; height: 100%; overflow: hidden; }
body { font-family: "Noto Sans", "Liberation Sans", sans-serif; background: #1a1a1a; }
button { font: inherit; padding: 0; cursor: default; }
p { margin: 0; }

.screen { position: relative; width: 1366px; height: 768px; background: #1a1a1a; display: flex; flex-direction: column; overflow: hidden; }
.middle { display: flex; height: 716px; flex: none; }
.side { width: 47px; flex: none; background: #1a1a1a; }
.desktop { width: 1272px; flex: none; display: flex; flex-direction: column; }
.browser { height: 678px; flex: none; display: flex; flex-direction: column; background: #fff; }

/* tabs */
.tabstrip { height: 32px; flex: none; background: #dee1e6; display: flex; align-items: stretch; padding-left: 7px; }
.tab { width: 101.500px; flex: none; display: flex; align-items: center; padding: 0 8px 2px 10px; gap: 7px; font-size: 11.500px; color: #45494e; position: relative; }
.tab-hover { background: #e8eaed; border-radius: 8px 8px 0 0; margin-left: -7px; width: 108.500px; padding-left: 17px; }
.tab-active { background: #fff; border-radius: 8px 8px 0 0; color: #3c4043; }
.tab-sep::before { content: ""; position: absolute; left: 0; top: 7px; height: 18px; border-left: 1px solid #9aa0a6; }
.tab-end::after { content: ""; position: absolute; right: 0; top: 7px; height: 18px; border-left: 1px solid #9aa0a6; }
.fav { width: 16px; height: 16px; flex: none; }
.tab-title { flex: 1; overflow: hidden; white-space: nowrap; -webkit-mask-image: linear-gradient(90deg, #000 80%, transparent); mask-image: linear-gradient(90deg, #000 80%, transparent); }
.tab-x { font-size: 11px; color: #444; flex: none; width: 11px; text-align: center; }
.newtab { font-size: 22px; line-height: 30px; color: #333; font-weight: 300; margin-left: 14px; width: 14px; text-align: center; }
.winctl { margin-left: auto; display: flex; align-items: center; gap: 30.500px; padding-right: 16px; }
.winbtn { width: 12px; height: 12px; }

/* address */
.addressbar { height: 32px; flex: none; display: flex; align-items: center; background: #fff; padding-left: 12px; }
.nav { display: flex; gap: 14px; width: 90px; flex: none; }
.navicon { width: 16px; height: 16px; }
.omnibox { width: 1039px; height: 24px; flex: none; background: #f1f3f4; border-radius: 12px; display: flex; align-items: center; padding: 0 8px 0 10px; }
.lock { width: 11px; height: 12px; }
.url { font-size: 12.500px; color: #202124; margin-left: 10px; }
.omni-actions { margin-left: auto; display: flex; gap: 14px; }
.omni-icon { width: 16px; height: 16px; }
.chrome-actions { margin-left: 13px; display: flex; align-items: center; gap: 13px; }
.avatar { width: 20px; height: 20px; margin: 0 -2px 0 0; border-radius: 50%; background: #0b8a72; color: #fff; font-size: 11px; line-height: 20px; text-align: center; }

/* bookmarks */
.bookmarks { height: 32px; flex: none; background: #fff; border-bottom: 1px solid #dadce0; display: flex; align-items: center; padding: 0 0 3px 12px; font-size: 10.500px; color: #45494e; }
.bm { display: flex; align-items: center; gap: 7px; white-space: nowrap; }
.bm-icon { width: 16px; height: 16px; flex: none; }
.bm-gmail { width: 66px; }
.bm-yt { width: 80px; }
.bm-maps { width: 66px; }
.bm-ex { width: 89px; }

/* excalidraw */
.page { position: relative; flex: 1; display: flex; flex-direction: column; justify-content: space-between; padding: 15px 15px 16px; background: #fff; }
.canvas { position: absolute; left: 0; top: 0; width: 1272px; height: 582px; }
.ink path, .ink ellipse { fill: none; stroke: #1e1e1e; stroke-width: 1.300; }
.ink .thin { stroke-width: .9; }
.ink-double path { fill: none; stroke: #333; stroke-width: .9; }
.hand { font-family: "DejaVu Sans", sans-serif; font-weight: 200; font-size: 17px; fill: #1e1e1e; stroke: #1e1e1e; stroke-width: .25; }

.page-top { position: relative; display: grid; grid-template-columns: 1fr auto 1fr; align-items: start; }
.top-right { display: flex; justify-content: flex-end; gap: 11px; }
.ex-btn { background: #fff; border: 1px solid #e3e3e8; border-radius: 8px; display: flex; align-items: center; justify-content: center; }
.menu-btn { width: 33px; height: 33px; }
.tool { width: 16px; height: 16px; }
.tool-sm { width: 14px; height: 14px; display: block; }
.ts { fill: none; stroke: #444; stroke-width: 1.100; }

.top-center { display: flex; flex-direction: column; align-items: center; }
.toolbar { width: 512px; height: 41px; background: #fff; border-radius: 6px; box-shadow: 0 0 1px rgba(0,0,0,.18), 0 3px 8px rgba(0,0,0,.08); display: flex; align-items: center; padding: 0 2px; }
.tool-cell { width: 37.400px; height: 34px; flex: none; display: flex; align-items: center; justify-content: center; position: relative; border-radius: 8px; }
.tool-on { background: #e3e2fe; width: 34px; margin: 0 1.700px; }
.tool-sep { width: 1px; height: 20px; background: #e7e7eb; flex: none; margin: 0 5.500px; }
.key { position: absolute; right: 5px; bottom: 3px; font-size: 8px; line-height: 1; color: #b8b8bf; }
.tool-on .key { color: #7c7aa8; right: 3px; }
.tool-a { font-family: "Liberation Serif", serif; font-size: 19px; color: #444; line-height: 1; }
.hint { font-family: Lato, "Noto Sans", sans-serif; font-size: 10.600px; color: #bdbdbd; margin-top: 12px; line-height: 14px; white-space: nowrap; }

.collab { width: 34px; height: 33px; background: #6965db; border: 0; border-radius: 8px; display: flex; align-items: center; justify-content: center; }
.library { width: 78px; height: 33px; gap: 9px; font-size: 10.500px; color: #777; padding-bottom: 1px; }

.page-bottom { position: relative; display: flex; justify-content: space-between; align-items: flex-end; }
.zoom-controls { display: flex; gap: 9px; }
.ex-group { display: flex; height: 33px; background: #fff; border: 1px solid #e3e3e8; border-radius: 8px; }
.ex-cell { display: flex; align-items: center; justify-content: center; font-size: 15px; color: #555; }
.ex-sq { width: 32.500px; }
.ex-sq + .ex-sq, .ex-pct, .ex-pct + .ex-sq { border-left: 1px solid #e3e3e8; }
.ex-pct { width: 56px; font-size: 11.500px; color: #777; }
.help { width: 33px; height: 33px; }

/* taskbar */
.taskbar { height: 38px; flex: none; background: #233340; display: flex; justify-content: space-between; }
.task-apps { display: flex; }
.app { width: 45.600px; flex: none; display: flex; align-items: center; justify-content: center; position: relative; }
.appicon { width: 22px; height: 22px; }
.app-open::after, .app-alert::after { content: ""; position: absolute; left: 4px; right: 4px; bottom: 0; height: 2px; background: #76b9ed; }
.app-alert { background: #a3683f; }
.app-alert::after { left: 0; right: 0; background: #f7630c; }
.app-active { background: #5c6a75; }
.app-active::after { left: 0; right: 0; }
.app-letter { font-family: "Liberation Sans", sans-serif; font-size: 9px; font-weight: 700; fill: #fff; text-anchor: middle; }
.app-badge { font-family: "Liberation Sans", sans-serif; font-size: 8px; font-weight: 700; fill: #fff; text-anchor: middle; }
.app-z { font-family: "Liberation Sans", sans-serif; font-size: 17px; font-weight: 700; fill: #fff; text-anchor: middle; }
.tray { display: flex; align-items: center; color: #fff; }
.tray-i { width: 16px; height: 16px; margin-right: 6.500px; }
.lang { font-size: 10.500px; width: 24px; margin-left: 1.500px; }
.clock { width: 66px; margin-left: 4px; display: flex; flex-direction: column; align-items: center; font-size: 10.500px; line-height: 17px; }
.tray-note { width: 18px; height: 18px; margin-left: 10px; }
.show-desktop { width: 1px; height: 100%; background: #5a6873; margin-left: 17px; margin-right: 3px; }

/* meeting */
.meeting { height: 52px; flex: none; background: #1a1a1a; display: flex; align-items: flex-start; padding-left: 20px; color: #c4c4c4; font-size: 11.500px; letter-spacing: -.15px; }
.m-item { flex: none; display: flex; flex-direction: column; align-items: center; white-space: nowrap; padding-top: 4px; }
.m-icon { width: 24px; height: 24px; display: block; margin-bottom: 3px; }
.m-iconwrap { position: relative; display: block; }
.m-count { position: absolute; left: 28px; top: 3px; font-size: 11.500px; color: #c4c4c4; line-height: 16px; }
.m-caret { flex: none; width: 12px; text-align: center; font-size: 13px; line-height: 26px; margin-top: 6px; color: #b9b9b9; }
.m-mute { width: 50px; }
.m-c1 { margin-left: 2px; }
.m-video { width: 80px; margin-left: 14px; }
.m-part { width: 78px; margin-left: 292px; }
.m-c2 { margin-left: 8px; }
.m-qa { width: 60px; margin-left: 16px; }
.m-chat { width: 50px; margin-left: 30px; }
.m-c3 { margin-left: 2px; }
.m-share { width: 80px; margin-left: 14px; color: #22d15f; }
.m-raise { width: 80px; margin-left: 13px; }
.m-apps { width: 60px; margin-left: 14px; }
.leave { width: 61px; height: 28px; margin: 12px 12px 0 auto; background: #b3211f; color: #fff; border: 0; border-radius: 7px; font-size: 12px; font-weight: 700; letter-spacing: 0; }

/* overlays */
.shield-box { position: absolute; left: 8px; top: 8px; width: 24px; height: 24px; background: #222; border-radius: 6px; display: flex; align-items: center; justify-content: center; }
.shield { width: 14px; height: 16px; }
.recording { position: absolute; left: 46px; top: 12px; display: flex; align-items: center; gap: 6px; font-size: 11.500px; color: rgba(255,255,255,.85); line-height: 16px; }
.rec-dot { width: 12px; height: 12px; border-radius: 50%; background: #e9483d; box-shadow: 0 0 4px 2px rgba(233,72,61,.45); }
.banner { position: absolute; left: 497px; top: 0; height: 22px; width: 372px; display: flex; font-size: 12px; font-weight: 600; border-radius: 0 0 5px 5px; overflow: hidden; line-height: 22px; }
.banner-green { width: 251px; flex: none; background: #22d15f; color: #123d20; text-align: center; white-space: nowrap; }
.banner-dark { flex: 1; background: #1c1c1e; color: #fff; padding-left: 16px; white-space: nowrap; font-size: 11.500px; display: flex; align-items: center; }
.banner-caret { width: 10px; height: 10px; margin-left: 17px; }
.signin { position: absolute; left: 1246px; top: 8px; width: 49px; height: 25px; border-radius: 6px; background: rgba(118,118,118,.6); color: #f2f2f2; font-size: 12px; line-height: 25px; text-align: center; }
.viewbtn { position: absolute; left: 1303px; top: 8px; width: 55px; height: 25px; border-radius: 6px; background: rgba(70,70,70,.8); color: #eee; font-size: 12px; display: flex; align-items: center; gap: 5px; padding-left: 6px; }
.viewgrid { width: 12px; height: 12px; }
.pen { position: absolute; left: 12px; top: 663px; width: 40px; height: 40px; border-radius: 50%; background: #111; border: 1px solid #2a2a2a; display: flex; align-items: center; justify-content: center; }
.pen-i { width: 17px; height: 17px; }
.activate { position: absolute; left: 1046px; top: 605px; color: #c4c4c4; white-space: nowrap; }
.act-1 { font-size: 17.700px; line-height: 22px; }
.act-2 { font-size: 13.350px; line-height: 20px; margin-top: 1px; color: #cfcfcf; }
.bluecheck { position: absolute; left: 1245px; top: 639px; width: 14px; height: 16px; }
.gallery { position: absolute; left: 766px; top: 611px; width: 228px; height: 60px; background: #1c1e21; border-radius: 3px; box-shadow: 0 1px 3px rgba(0,0,0,.4); display: flex; flex-direction: column; padding: 0 3px 2px 0; }
.gal-top { height: 28px; flex: none; display: flex; align-items: center; justify-content: space-between; padding: 0 3px 0 8px; }
.gal-views { display: flex; align-items: center; gap: 14px; }
.gal-min { width: 12px; height: 3px; background: #2f8cf0; margin: 10px 2px 0 0; }
.gal-speaker { width: 13px; height: 9px; background: #d0d0d0; border-radius: 1px; margin-top: 3px; }
.gal-icon { width: 14px; height: 14px; }
.gal-pip { width: 16px; height: 14px; }
.gal-talk { flex: 1; background: #242f39; color: #ddd; font-size: 12px; line-height: 30px; padding-left: 26px; }
.cursor { position: absolute; left: 915px; top: 570px; width: 12px; height: 17px; }
```
